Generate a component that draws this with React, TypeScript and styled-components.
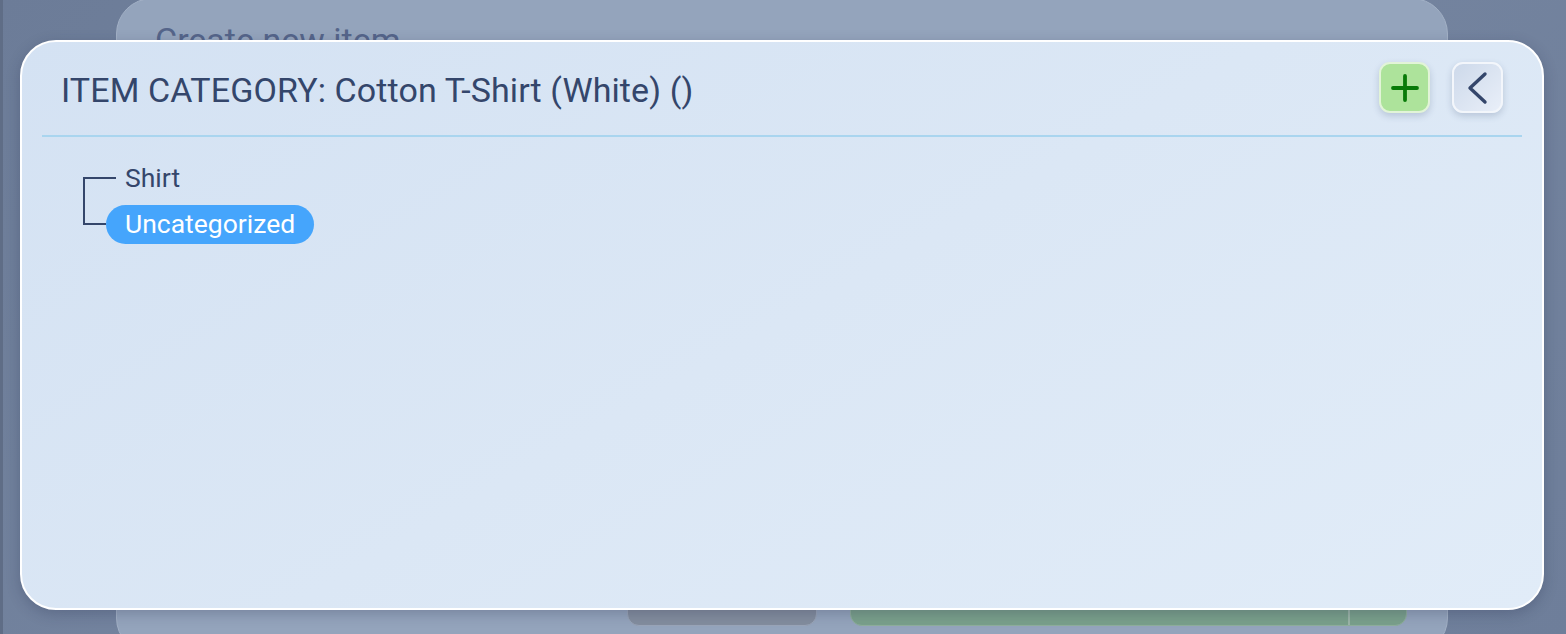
import styled, { createGlobalStyle } from 'styled-components'

const GlobalStyle = createGlobalStyle`
  html, body {
    margin: 0;
    padding: 0;
    background: #6f7f9b;
  }
  body {
    font-family: Roboto, "Noto Sans", "Liberation Sans", sans-serif;
  }
`

type Node = {
  label: string
  active?: boolean
}

const nodes: Node[] = [
  { label: 'Shirt' },
  { label: 'Uncategorized', active: true },
]

export default function App() {
  return (
    <Root>
      <GlobalStyle />
      <EdgeStrip />

      {/* page behind the dialog, dimmed */}
      <BehindCard>
        <BehindTitle>Create new item</BehindTitle>
        <BehindSpacer />
        <BehindActions>
          <GhostButton />
          <SaveButton>
            <SaveMain />
            <SaveSide />
          </SaveButton>
        </BehindActions>
      </BehindCard>

      <Dialog>
        <Header>
          <Title>ITEM CATEGORY: Cotton T-Shirt (White) ()</Title>
          <Actions>
            <IconButton $variant="add" aria-label="Add">
              <svg width="30" height="30" viewBox="0 0 30 30">
                <path d="M15 3 V27 M3 15 H27" stroke="#087a08" strokeWidth="3.8" strokeLinecap="round" />
              </svg>
            </IconButton>
            <IconButton $variant="back" aria-label="Back">
              <svg width="30" height="34" viewBox="0 0 30 34">
                <path d="M22 3 L7 17 L22 31" stroke="#34466b" strokeWidth="3.4" fill="none" strokeLinecap="round" strokeLinejoin="round" />
              </svg>
            </IconButton>
          </Actions>
        </Header>

        <Body>
          <Tree>
            {nodes.map((n, i) => (
              <TreeRow key={n.label}>
                <Connector $width={n.active ? 23 : 33}>
                  <ConnTop $first={i === 0} />
                  <ConnBottom $last={i === nodes.length - 1} />
                </Connector>
                <NodeLabel $active={n.active}>{n.label}</NodeLabel>
              </TreeRow>
            ))}
          </Tree>
        </Body>
      </Dialog>
    </Root>
  )
}

const Root = styled.div`
  position: relative;
  width: 1566px;
  height: 634px;
  overflow: hidden;
  background: linear-gradient(135deg, #6c7c98 0%, #7585a0 50%, #6e7e9a 100%);
  display: flex;
`

const EdgeStrip = styled.div`
  width: 3px;
  flex-shrink: 0;
  background: #5f6d86;
`

const BehindCard = styled.div`
  margin: -2px 0 0 113px;
  width: 1332px;
  height: 656px;
  flex-shrink: 0;
  box-sizing: border-box;
  border-radius: 36px;
  border: 1px solid #a3b1c6;
  background: #94a4bc;
  display: flex;
  flex-direction: column;
  padding: 21px 40px 0 38px;
`

const BehindTitle = styled.div`
  font-size: 34px;
  color: #55658a;
  line-height: 40px;
`

const BehindSpacer = styled.div`
  flex: 1;
`

const BehindActions = styled.div`
  display: flex;
  gap: 33px;
  padding: 0 0 27px 472px;
`

const GhostButton = styled.div`
  width: 190px;
  height: 58px;
  border-radius: 12px;
  background: #838d9e;
  border: 1px solid #9aa5b8;
  box-sizing: border-box;
`

const SaveButton = styled.div`
  width: 558px;
  height: 58px;
  border-radius: 12px;
  background: #7aa08b;
  border: 1px solid #8fae9c;
  box-sizing: border-box;
  display: flex;
  overflow: hidden;
`

const SaveMain = styled.div`
  flex: 1;
  border-right: 2px solid #9cb5a8;
`

const SaveSide = styled.div`
  width: 56px;
`

const Dialog = styled.div`
  position: absolute;
  left: 20px;
  top: 40px;
  width: 1524px;
  height: 570px;
  box-sizing: border-box;
  border-radius: 36px;
  border: 2px solid #ffffff;
  background: linear-gradient(150deg, #d4e2f3 0%, #dbe7f5 50%, #e1ecf8 100%);
  box-shadow: 0 4px 14px rgba(30, 40, 70, 0.25);
  display: flex;
  flex-direction: column;
`

const Header = styled.div`
  display: flex;
  align-items: center;
  justify-content: space-between;
  height: 93px;
  margin: 0 20px;
  padding: 0 19px 0 19px;
  border-bottom: 2px solid #a9d5ef;
`

const Title = styled.h1`
  margin: 0;
  font-weight: 400;
  font-size: 34px;
  color: #34466b;
  letter-spacing: 0.1px;
  margin-top: 2px;
`

const Actions = styled.div`
  display: flex;
  gap: 22px;
  margin-top: -2px;
`

const IconButton = styled.button<{ $variant: 'add' | 'back' }>`
  width: 51px;
  height: 51px;
  box-sizing: border-box;
  border-radius: 11px;
  padding: 0;
  display: flex;
  align-items: center;
  justify-content: center;
  cursor: pointer;
  border: 2px solid ${p => (p.$variant === 'add' ? '#e2f4d8' : '#f3f6fb')};
  background: ${p =>
    p.$variant === 'add'
      ? '#ade39b'
      : 'linear-gradient(135deg, #cdd9ea 0%, #e9eff9 100%)'};
  box-shadow: 0 3px 7px rgba(40, 60, 100, 0.2);
`

const Body = styled.div`
  padding: 18px 0 0 61px;
`

const Tree = styled.div`
  display: flex;
  flex-direction: column;
`

const TreeRow = styled.div`
  display: flex;
  align-items: center;
  height: 46px;
`

const Connector = styled.div<{ $width: number }>`
  align-self: stretch;
  width: ${p => p.$width}px;
  display: flex;
  flex-direction: column;
`

const ConnTop = styled.div<{ $first: boolean }>`
  height: 24px;
  box-sizing: border-box;
  border-bottom: 2px solid #34466b;
  border-left: ${p => (p.$first ? 'none' : '2px solid #34466b')};
`

const ConnBottom = styled.div<{ $last: boolean }>`
  flex: 1;
  border-left: ${p => (p.$last ? 'none' : '2px solid #34466b')};
`

const NodeLabel = styled.span<{ $active?: boolean }>`
  font-size: 26.5px;
  line-height: 35px;
  height: 39px;
  box-sizing: border-box;
  padding-top: 1px;
  color: ${p => (p.$active ? '#ffffff' : '#34466b')};
  background: ${p => (p.$active ? '#45a5fc' : 'transparent')};
  border-radius: 20px;
  padding-left: ${p => (p.$active ? '19px' : '9px')};
  padding-right: ${p => (p.$active ? '19px' : '0')};
`
